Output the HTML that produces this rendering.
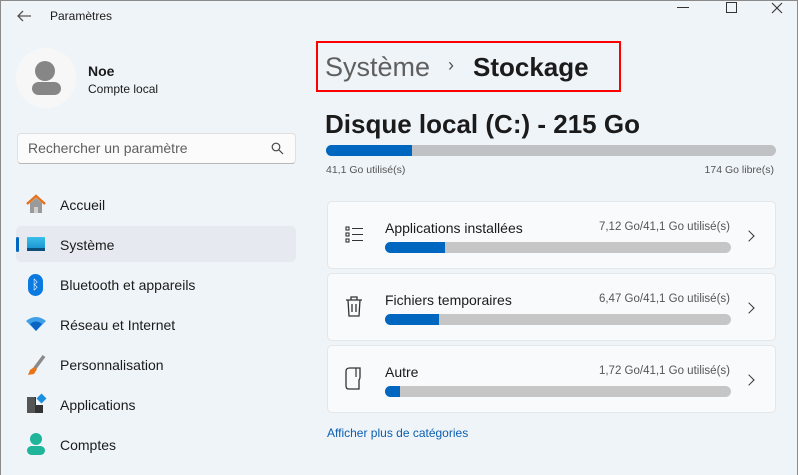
<!DOCTYPE html>
<html><head><meta charset="utf-8"><style>
*{margin:0;padding:0;box-sizing:border-box}
body{width:798px;height:475px;overflow:hidden;background:#eff4f9;font-family:"Liberation Sans",sans-serif;color:#1b1b1b;position:relative}
.frame{position:absolute;left:0;top:0;width:798px;height:475px;border:1px solid #8a8a8a;border-bottom:none}
.a{position:absolute;white-space:nowrap}
.bar{position:absolute;height:11px;border-radius:6px;background:#c6c6c6;overflow:hidden}
.bar i{display:block;height:100%;background:#0067c0}
.card{position:absolute;left:327px;width:449px;height:68px;background:#f9fafc;border:1px solid #e3e6ea;border-radius:5px}
.nav{position:absolute;left:60px;font-size:14px}
.chev{position:absolute;left:747px;width:8px;height:8px;border-right:1.5px solid #333;border-top:1.5px solid #333;transform:rotate(45deg)}
</style></head><body>
<div class="frame"></div>
<svg class="a" style="left:16px;top:9px" width="16" height="14"><path d="M15 7H2M7 2L2 7l5 5" stroke="#555" stroke-width="1.3" fill="none"/></svg>
<div class="a" style="left:50px;top:9px;font-size:12px">Paramètres</div>
<div class="a" style="left:677px;top:7px;width:12px;border-top:1px solid #333;top:7px"></div>
<div class="a" style="left:726px;top:2px;width:11px;height:11px;border:1px solid #333"></div>
<svg class="a" style="left:771px;top:2px" width="12" height="12"><path d="M1 1l10 10M11 1L1 11" stroke="#333" stroke-width="1.1"/></svg>
<div class="a" style="left:16px;top:48px;width:60px;height:60px;border-radius:50%;background:#f7f7f7"></div>
<div class="a" style="left:35px;top:61px;width:20px;height:20px;border-radius:50%;background:#868686"></div>
<div class="a" style="left:32px;top:82px;width:29px;height:13px;border-radius:7px;background:#868686"></div>
<div class="a" style="left:88px;top:63px;font-size:14px;font-weight:bold">Noe</div>
<div class="a" style="left:88px;top:82px;font-size:12px">Compte local</div>
<div class="a" style="left:17px;top:133px;width:279px;height:31px;background:#fbfbfc;border:1px solid #e0e0e0;border-bottom-color:#b8b8b8;border-radius:4px"></div>
<div class="a" style="left:28px;top:140px;font-size:14px;color:#5f5f5f">Rechercher un paramètre</div>
<svg class="a" style="left:271px;top:142px" width="13" height="13"><circle cx="5" cy="5" r="3.8" stroke="#444" fill="none" stroke-width="1.2"/><path d="M8 8l4 4" stroke="#444" stroke-width="1.2"/></svg>
<div class="a" style="left:16px;top:226px;width:280px;height:36px;background:#e6eaf0;border-radius:5px"></div>
<div class="a" style="left:16px;top:237px;width:3px;height:15px;background:#0067c0;border-radius:2px"></div>
<svg class="a" style="left:25px;top:193px" width="22" height="22"><path d="M2 11L11 3l9 8" stroke="#e8701a" stroke-width="2.5" fill="none"/><path d="M5 10v10h12V10L11 5z" fill="#9a9a9a"/><rect x="9" y="14" width="4" height="6" fill="#d0d0d0"/></svg>
<div class="a" style="left:27px;top:237px;width:18px;height:13px;background:linear-gradient(#38c0ea,#1a8fd0);border-radius:1px"></div>
<div class="a" style="left:27px;top:248px;width:18px;height:3px;background:#0d4f7a"></div>
<div class="a" style="left:28px;top:274px;width:15px;height:22px;background:#0a7ae0;border-radius:8px;color:#fff;font-size:13px;text-align:center;line-height:22px">ᛒ</div>
<svg class="a" style="left:26px;top:316px" width="20" height="16"><path d="M0 5Q10-3 20 5L10 15z" fill="#3fa0e8"/><path d="M4 8Q10 3 16 8L10 15z" fill="#0b63c4"/></svg>
<svg class="a" style="left:26px;top:354px" width="20" height="22"><path d="M18 2L9 14" stroke="#8a8a8a" stroke-width="3.5"/><path d="M8 13l3 2-3 5-6 1 2-5z" fill="#e8751a"/></svg>
<div class="a" style="left:27px;top:397px;width:16px;height:16px;background:linear-gradient(90deg,#555 50%,#333 50%)"></div>
<div class="a" style="left:36px;top:397px;width:8px;height:8px;background:#eff4f9"></div>
<div class="a" style="left:38px;top:395px;width:7px;height:7px;background:#1a8fe0;transform:rotate(45deg)"></div>
<div class="a" style="left:30px;top:433px;width:12px;height:12px;border-radius:50%;background:#1fb59a"></div>
<div class="a" style="left:27px;top:446px;width:18px;height:9px;border-radius:5px;background:#1fb59a"></div>
<div class="nav" style="top:197px">Accueil</div>
<div class="nav" style="top:237px">Système</div>
<div class="nav" style="top:277px">Bluetooth et appareils</div>
<div class="nav" style="top:317px">Réseau et Internet</div>
<div class="nav" style="top:357px">Personnalisation</div>
<div class="nav" style="top:397px">Applications</div>
<div class="nav" style="top:437px">Comptes</div>
<div class="a" style="left:316px;top:41px;width:305px;height:51px;border:2px solid #f00"></div>
<div class="a" style="left:325px;top:52px;font-size:27px;color:#5f5f5f">Système</div>
<div class="a" style="left:448px;top:55px;font-size:18px;color:#555">›</div>
<div class="a" style="left:473px;top:52px;font-size:26px;font-weight:bold;color:#1b1b1b">Stockage</div>
<div class="a" style="left:325px;top:109px;font-size:26px;font-weight:bold">Disque local (C:) - 215 Go</div>
<div class="bar" style="left:326px;top:145px;width:450px;background:#bfc1c4"><i style="width:86px"></i></div>
<div class="a" style="left:326px;top:164px;font-size:10.5px;color:#555">41,1 Go utilisé(s)</div>
<div class="a" style="right:24px;top:164px;font-size:10.5px;color:#555">174 Go libre(s)</div>
<div class="card" style="top:201px"></div>
<div class="card" style="top:273px"></div>
<div class="card" style="top:345px"></div>
<svg class="a" style="left:345px;top:226px" width="20" height="18"><g stroke="#333" fill="none" stroke-width="1.1"><rect x="1" y="1" width="3" height="3"/><rect x="1" y="7" width="3" height="3"/><rect x="1" y="13" width="3" height="3"/><path d="M7 2.5h11M7 8.5h11M7 14.5h11"/></g></svg>
<svg class="a" style="left:345px;top:296px" width="18" height="22"><g stroke="#333" fill="none" stroke-width="1.3"><path d="M1 4h16M6 4V1h6v3M3 4l1 16h10l1-16M7 8v8M11 8v8"/></g></svg>
<svg class="a" style="left:344px;top:367px" width="18" height="24"><path d="M2 4q0-3 4-3h10v9q0 2-1 3v9H5q-3 0-3-3z" stroke="#333" stroke-width="1.3" fill="none"/><path d="M12 1v9" stroke="#333" stroke-width="1.2"/></svg>
<div class="a" style="left:385px;top:220px;font-size:14px">Applications installées</div>
<div class="a" style="left:385px;top:292px;font-size:14px">Fichiers temporaires</div>
<div class="a" style="left:385px;top:364px;font-size:14px">Autre</div>
<div class="a" style="right:68px;top:221px;font-size:11.5px;color:#555">7,12 Go/41,1 Go utilisé(s)</div>
<div class="a" style="right:68px;top:293px;font-size:11.5px;color:#555">6,47 Go/41,1 Go utilisé(s)</div>
<div class="a" style="right:68px;top:365px;font-size:11.5px;color:#555">1,72 Go/41,1 Go utilisé(s)</div>
<div class="bar" style="left:385px;top:242px;width:346px"><i style="width:60px"></i></div>
<div class="bar" style="left:385px;top:314px;width:346px"><i style="width:54px"></i></div>
<div class="bar" style="left:385px;top:386px;width:346px"><i style="width:15px"></i></div>
<div class="chev" style="top:232px;left:745px"></div>
<div class="chev" style="top:304px;left:745px"></div>
<div class="chev" style="top:376px;left:745px"></div>
<div class="a" style="left:327px;top:426px;font-size:12px;color:#0a5fb0">Afficher plus de catégories</div>
</body></html>
